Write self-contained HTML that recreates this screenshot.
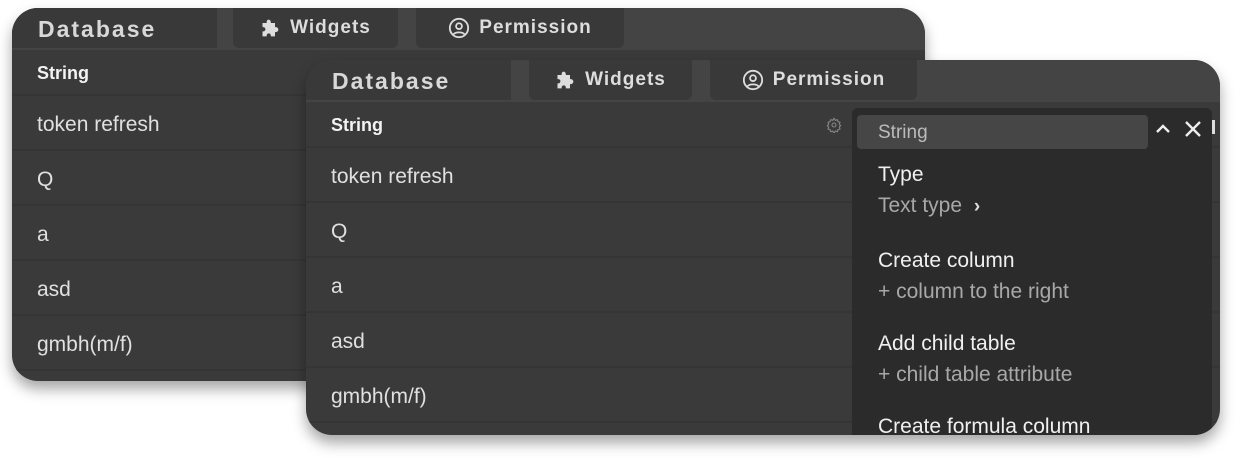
<!DOCTYPE html>
<html><head><style>
*{margin:0;padding:0;box-sizing:border-box}
body{width:1240px;height:458px;background:#fff;position:relative;overflow:hidden;font-family:"Liberation Sans",sans-serif}
.card{position:absolute;background:#3a3a3a;border-radius:26px;overflow:hidden;box-shadow:0 8px 14px rgba(0,0,0,.35)}
.hdr{position:absolute;left:0;top:0;right:0;height:42px;background:#444}
.tab{position:absolute;top:0;height:40px;background:#393939;border-radius:0 0 6px 6px;color:#ddd;font-weight:bold;display:flex;align-items:center;justify-content:center;letter-spacing:1.5px}
.tab.db{justify-content:flex-start;padding-left:26px;font-size:23px;letter-spacing:2px;border-radius:0;color:#d8d8d8}
.tab.s{font-size:19px;letter-spacing:1px}
.row{position:absolute;left:0;right:0;height:55px;border-bottom:2px solid #353535;color:#e0e0e0;font-size:21px;padding-left:25px;padding-top:4px;display:flex;align-items:center}
.row.h{font-weight:bold;font-size:18px;color:#f2f2f2;height:46px;padding-top:3px}
.dd{position:absolute;left:546px;top:48px;width:360px;height:340px;background:#2b2b2b;border-radius:6px}
.it{position:absolute;left:26px;color:#f0f0f0;font-size:21px}
.sub{color:#a8a8a8}
</style></head><body>

<div class="card" style="left:12px;top:8px;width:913px;height:373px">
 <div class="hdr"></div>
 <div class="tab db" style="left:0;width:205px;padding-top:2px">Database</div>
 <div class="tab s" style="left:221px;width:165px"><svg width="20" height="20" viewBox="0 0 24 24" style="margin-right:10px"><path fill="#ddd" d="M10 2a3 3 0 0 1 3 3v1h5v5h1a3 3 0 0 1 0 6h-1v5h-5v-1a2.5 2.5 0 0 0-5 0v1H3v-6h1a2.5 2.5 0 0 0 0-5H3V6h5V5a3 3 0 0 1 2-3z"/></svg>Widgets</div>
 <div class="tab s" style="left:404px;width:208px"><svg width="22" height="22" viewBox="0 0 24 24" style="margin-right:9px" fill="none" stroke="#ddd" stroke-width="2"><circle cx="12" cy="12" r="10"/><circle cx="12" cy="10" r="3.2"/><path d="M6 19c2-3 10-3 12 0"/></svg>Permission</div>
 <div class="row h" style="top:42px">String</div>
 <div class="row" style="top:88px">token refresh</div>
 <div class="row" style="top:143px">Q</div>
 <div class="row" style="top:198px">a</div>
 <div class="row" style="top:253px">asd</div>
 <div class="row" style="top:308px">gmbh(m/f)</div>
</div>

<div class="card" style="left:306px;top:60px;width:914px;height:375px">
 <div class="hdr"></div>
 <div class="tab db" style="left:0;width:205px;padding-top:2px">Database</div>
 <div class="tab s" style="left:223px;width:163px"><svg width="20" height="20" viewBox="0 0 24 24" style="margin-right:10px"><path fill="#ddd" d="M10 2a3 3 0 0 1 3 3v1h5v5h1a3 3 0 0 1 0 6h-1v5h-5v-1a2.5 2.5 0 0 0-5 0v1H3v-6h1a2.5 2.5 0 0 0 0-5H3V6h5V5a3 3 0 0 1 2-3z"/></svg>Widgets</div>
 <div class="tab s" style="left:404px;width:207px"><svg width="22" height="22" viewBox="0 0 24 24" style="margin-right:9px" fill="none" stroke="#ddd" stroke-width="2"><circle cx="12" cy="12" r="10"/><circle cx="12" cy="10" r="3.2"/><path d="M6 19c2-3 10-3 12 0"/></svg>Permission</div>
 <div class="row h" style="top:42px">String</div>
 <div class="row" style="top:88px">token refresh</div>
 <div class="row" style="top:143px">Q</div>
 <div class="row" style="top:198px">a</div>
 <div class="row" style="top:253px">asd</div>
 <div class="row" style="top:308px">gmbh(m/f)</div>
 <svg style="position:absolute;left:520px;top:57px" width="16" height="16" viewBox="0 0 24 24" fill="none" stroke="#888" stroke-width="1.6"><circle cx="12" cy="12" r="3"/><path d="M12 2l2 3 3-1 1 3 3 1-1 3 2 2-2 2 1 3-3 1-1 3-3-1-2 3-2-3-3 1-1-3-3-1 1-3-2-2 2-2-1-3 3-1 1-3 3 1z"/></svg>
 <div class="dd">
  <div style="position:absolute;left:5px;top:7px;width:291px;height:34px;background:#464646;border-radius:4px;color:#bbb;font-size:19px;padding-left:21px;line-height:36px">String</div>
  <svg style="position:absolute;left:303px;top:14px" width="16" height="14" viewBox="0 0 16 14" fill="none" stroke="#eee" stroke-width="2.4"><path d="M2 10l6-6 6 6"/></svg>
  <svg style="position:absolute;left:332px;top:12px" width="18" height="18" viewBox="0 0 18 18" stroke="#eee" stroke-width="2.4"><path d="M2 2l14 14M16 2L2 16"/></svg>
  <div class="it" style="top:55px">Type</div>
  <div class="it sub" style="top:86px">Text type <span style="font-size:19px;color:#ddd;margin-left:6px;font-weight:bold">›</span></div>
  <div class="it" style="top:141px">Create column</div>
  <div class="it sub" style="top:172px">+ column to the right</div>
  <div class="it" style="top:224px">Add child table</div>
  <div class="it sub" style="top:255px">+ child table attribute</div>
  <div class="it" style="top:307px">Create formula column</div>
 </div>
 <div style="position:absolute;left:906px;top:60px;width:3px;height:14px;background:#ddd"></div>
</div>
</body></html>
